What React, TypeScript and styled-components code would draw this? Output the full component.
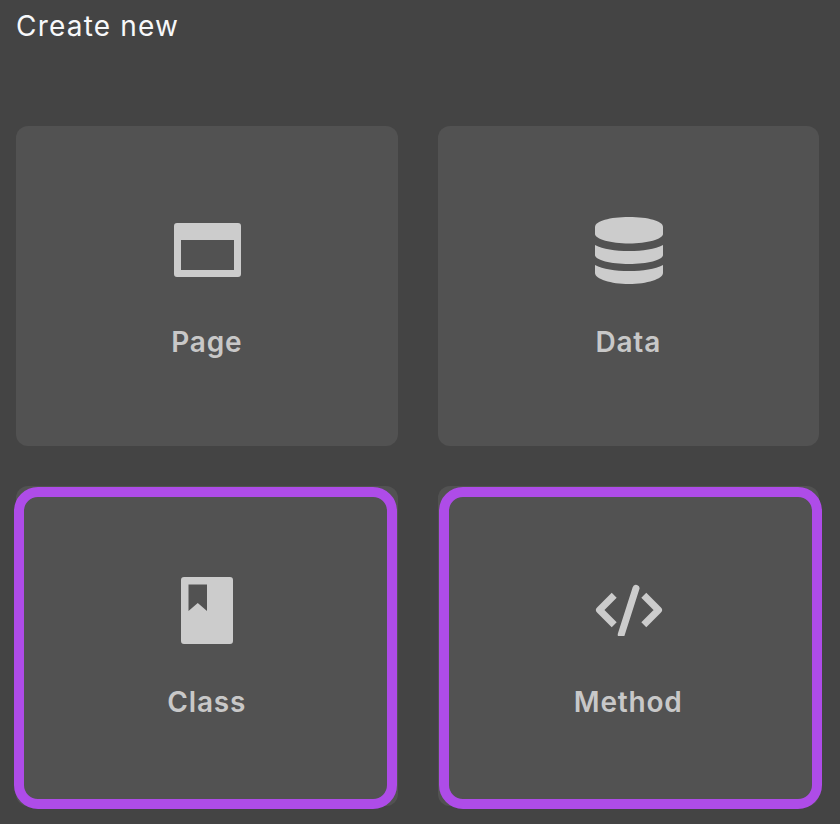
import React from "react";
import styled, { createGlobalStyle } from "styled-components";

const Global = createGlobalStyle`
  html, body { margin: 0; padding: 0; background: #444444; }
  body { width: 840px; height: 824px; overflow: hidden; font-family: "Inter", "Noto Sans", sans-serif; }
`;

const Screen = styled.div`
  box-sizing: border-box;
  width: 840px;
  height: 824px;
  padding: 8px 21px 0 16px;
  background: #444444;
`;

const Title = styled.h1`
  margin: 0;
  height: 118px;
  font-size: 28px;
  line-height: 36px;
  letter-spacing: 1.2px;
  font-weight: 400;
  color: #f7f8fa;
`;

const Grid = styled.div`
  display: grid;
  grid-template-columns: 381.5px 381.5px;
  grid-auto-rows: 320px;
  gap: 40px;
`;

const Card = styled.div<{ $selected?: boolean; $outlineLeft?: number }>`
  position: relative;
  display: flex;
  flex-direction: column;
  align-items: center;
  padding-top: 90px;
  box-sizing: border-box;
  background: #525252;
  border-radius: 12px;
  ${(p) =>
    p.$selected &&
    `
    &::after {
      content: "";
      position: absolute;
      box-sizing: border-box;
      top: 1px;
      left: ${p.$outlineLeft ?? -2}px;
      width: 383px;
      height: 322px;
      border: 10px solid #ae4ce8;
      border-radius: 24px;
    }
  `}
`;

const IconBox = styled.div`
  width: 70px;
  height: 68px;
  margin-left: 1px;
  display: flex;
  align-items: center;
  justify-content: center;
  svg { display: block; fill: #cccccc; }
`;

const Label = styled.div`
  margin-top: 40px;
  font-size: 28px;
  line-height: 36px;
  letter-spacing: 0.8px;
  font-weight: 600;
  color: #c8c8c8;
`;

const PageIcon = () => (
  <svg width="67" height="54" viewBox="0 0 67 54">
    <path fillRule="evenodd" d="M3 0h61a3 3 0 0 1 3 3v48a3 3 0 0 1-3 3H3a3 3 0 0 1-3-3V3a3 3 0 0 1 3-3zM7 17v30h53V17z" />
  </svg>
);

const DataIcon = () => (
  <svg width="68" height="67" viewBox="0 0 68 67">
    <path d="M0 10C0 4 15 0 34 0s34 4 34 10v7c0 5-16 9.500-34 9.500S0 22 0 17z" />
    <path d="M0 28c8 4 20 6 34 6s26-2 34-6v10c0 5-16 9-34 9S0 43 0 38z" />
    <path d="M0 48c8 4 20 6 34 6s26-2 34-6v8c0 6-16 11-34 11S0 62 0 56z" />
  </svg>
);

const ClassIcon = () => (
  <svg width="52" height="67" viewBox="0 0 52 67">
    <path fillRule="evenodd" d="M3 0h46a3 3 0 0 1 3 3v61a3 3 0 0 1-3 3H3a3 3 0 0 1-3-3V3a3 3 0 0 1 3-3zM7.500 7.500V34l9.250-8 9.250 8V7.500z" />
  </svg>
);

const MethodGlyph = styled.svg`
  && { fill: none; }
  stroke: #cccccc;
  stroke-width: 7px;
  stroke-linejoin: round;
`;

const MethodIcon = () => (
  <MethodGlyph width="68" height="52" viewBox="0 -2 68 52">
    <path d="M19.200 9.300 4.500 24 19.200 38.700" />
    <path d="M48.800 9.300 63.500 24 48.800 38.700" />
    <path d="M41 2.300 26.300 48.300" strokeLinecap="round" />
  </MethodGlyph>
);

const items = [
  { label: "Page", icon: <PageIcon />, selected: false, outlineLeft: undefined },
  { label: "Data", icon: <DataIcon />, selected: false, outlineLeft: undefined },
  { label: "Class", icon: <ClassIcon />, selected: true, outlineLeft: -2 },
  { label: "Method", icon: <MethodIcon />, selected: true, outlineLeft: 1 },
];

export default function App() {
  return (
    <Screen>
      <Global />
      <Title>Create new</Title>
      <Grid>
        {items.map((it) => (
          <Card key={it.label} $selected={it.selected} $outlineLeft={it.outlineLeft}>
            <IconBox>{it.icon}</IconBox>
            <Label>{it.label}</Label>
          </Card>
        ))}
      </Grid>
    </Screen>
  );
}
